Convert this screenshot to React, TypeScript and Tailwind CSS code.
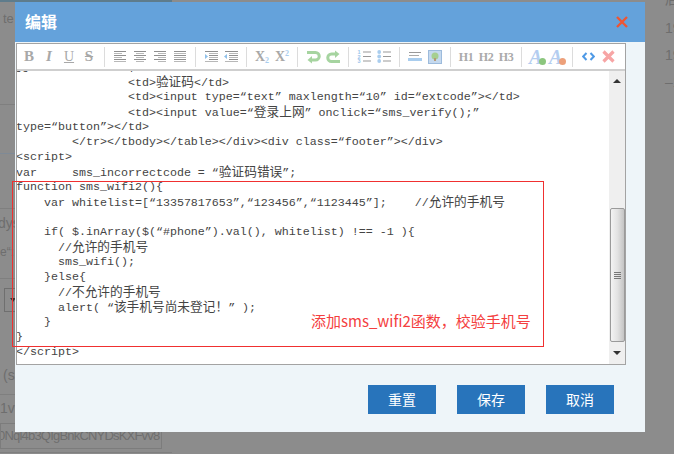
import React from "react";

const MONO = "font-['Liberation_Mono','Noto_Sans_CJK_SC',monospace]";

function CodeLine({ text }: { text: string }) {
  const parts = text.split(/([\u4e00-\u9fff！]+)/);
  return (
    <div className="h-[15px] leading-[15px] whitespace-pre overflow-hidden">
      {parts.map((p, i) =>
        i % 2 === 1 ? (
          <span key={i} className="text-[12.7px] leading-none font-['Noto_Sans_CJK_SC',sans-serif]">{p}</span>
        ) : (
          <span key={i}>{p}</span>
        )
      )}
    </div>
  );
}

const code = [
  "jj              |",
  "                <td>验证码</td>",
  "                <td><input type=“text” maxlength=“10” id=“extcode”></td>",
  "                <td><input value=“登录上网” onclick=“sms_verify();”",
  "type=“button”></td>",
  "        </tr></tbody></table></div><div class=“footer”></div>",
  "<script>",
  "var     sms_incorrectcode = “验证码错误”;",
  "function sms_wifi2(){",
  "    var whitelist=[“13357817653”,“123456”,“1123445”];    //允许的手机号",
  "",
  "    if( $.inArray($(“#phone”).val(), whitelist) !== -1 ){",
  "      //允许的手机号",
  "      sms_wifi();",
  "    }else{",
  "      //不允许的手机号",
  "      alert( “该手机号尚未登记！” );",
  "    }",
  "}",
  "</script>",
];

function Btn({ children }: { children: React.ReactNode }) {
  return <div className="w-5 h-5 flex items-center justify-center shrink-0">{children}</div>;
}
function Sep() {
  return (
    <div className="w-[11px] h-5 flex justify-center shrink-0">
      <div className="w-px h-5 bg-[#dcdcdc]" />
    </div>
  );
}
function Letter({ c, extra = "" }: { c: string; extra?: string }) {
  return <span className={`font-['Liberation_Serif',serif] leading-none text-[#a8a8a8] ${extra}`}>{c}</span>;
}
function Lines({ xs }: { xs: [number, number][] }) {
  return (
    <svg width="14" height="13" viewBox="0 0 14 13">
      {xs.map(([a, b], i) => (
        <rect key={i} x={a} y={1 + i * 2} width={b - a} height="1" fill={i % 2 ? "#b8b8b8" : "#8f8f8f"} />
      ))}
    </svg>
  );
}
const Indent = ({ out }: { out?: boolean }) => (
  <svg width="14" height="13" viewBox="0 0 14 13">
    {[0, 1, 2, 3, 4, 5].map((i) => (
      <rect key={i} x={i > 0 && i < 5 ? 5 : 1} y={1 + i * 2} width={i > 0 && i < 5 ? 9 : 13} height="1" fill={i % 2 ? "#b8b8b8" : "#8f8f8f"} />
    ))}
    <path d={out ? "M0 6.5L3 4v5z" : "M4 6.5L1 4v5z"} fill="#8fc0ea" />
  </svg>
);
const Arrow = ({ flip }: { flip?: boolean }) => (
  <svg width="15" height="14" viewBox="0 0 15 14" style={flip ? { transform: "rotate(180deg)" } : undefined}>
    <path d="M1 2.5H9.5a3.7 3.7 0 0 1 0 7.5H5" fill="none" stroke="#a6d4a0" strokeWidth="3" />
    <path d="M6 6L1.5 10L6 13.5z" fill="#a6d4a0" />
  </svg>
);
const ListIcon = ({ ordered }: { ordered?: boolean }) => (
  <svg width="14" height="14" viewBox="0 0 14 14">
    {[1.5, 6, 10.5].map((y, i) => (
      <g key={y}>
        {ordered ? (
          <text x="0.5" y={y + 2.5} fontSize="5.5" fontFamily="Liberation Sans" fontWeight="bold" fill="#9cc5ea">{i + 1}</text>
        ) : (
          <circle cx="2.2" cy={y + 0.5} r="1.9" fill="#a9cdee" />
        )}
        <rect x="6" y={y} width="8" height="1" fill="#999" />
      </g>
    ))}
  </svg>
);
const FontIcon = ({ add }: { add?: boolean }) => (
  <span className="relative w-4 h-4 block">
    <span className="absolute -top-[2px] left-0 font-['Liberation_Serif',serif] italic font-bold text-[20px] leading-[20px] text-[#b4cdf0]">A</span>
    <span className={`absolute -right-[1px] bottom-0 w-[7px] h-[7px] rounded-full ${add ? "bg-[#8cc67e]" : "bg-[#eda07a]"}`} />
  </span>
);

function Toolbar() {
  return (
    <div className="h-[27px] shrink-0 flex items-center pl-[2px] bg-white border-b-2 border-[#cfcfcf]">
      <Btn><Letter c="B" extra="font-bold text-[15px]" /></Btn>
      <Btn><Letter c="I" extra="italic font-bold text-[15px]" /></Btn>
      <Btn><Letter c="U" extra="underline text-[14px]" /></Btn>
      <Btn><Letter c="S" extra="line-through text-[15px] font-bold" /></Btn>
      <Sep />
      <Btn><Lines xs={[[1, 13], [1, 9], [1, 13], [1, 9], [1, 13], [1, 13]]} /></Btn>
      <Btn><Lines xs={[[1, 13], [3, 11], [1, 13], [3, 11], [1, 13], [3, 11]]} /></Btn>
      <Btn><Lines xs={[[1, 13], [5, 13], [1, 13], [5, 13], [1, 13], [5, 13]]} /></Btn>
      <Btn><Lines xs={[[1, 13], [1, 13], [1, 13], [1, 13], [1, 13], [1, 13]]} /></Btn>
      <Sep />
      <Btn><Indent /></Btn>
      <Btn><Indent out /></Btn>
      <Sep />
      <Btn>
        <span className="flex items-end h-[14px] font-['Liberation_Serif',serif] font-bold text-[14px] leading-none text-[#a8a8a8]">
          X<span className="text-[8px] leading-[7px] text-[#a9cdee]">2</span>
        </span>
      </Btn>
      <Btn>
        <span className="flex items-start h-[14px] font-['Liberation_Serif',serif] font-bold text-[14px] leading-none text-[#a8a8a8]">
          X<span className="text-[8px] leading-[7px] text-[#a9cdee]">2</span>
        </span>
      </Btn>
      <Sep />
      <Btn><Arrow /></Btn>
      <Btn><Arrow flip /></Btn>
      <Sep />
      <Btn><ListIcon ordered /></Btn>
      <Btn><ListIcon /></Btn>
      <Sep />
      <Btn>
        <svg width="14" height="13" viewBox="0 0 14 13">
          <rect x="1" y="2" width="12" height="1" fill="#999" />
          <rect x="1" y="5" width="10" height="1" fill="#aaa" />
          <rect x="0" y="8" width="14" height="3" fill="#a9cdee" />
        </svg>
      </Btn>
      <Btn>
        <svg width="14" height="14" viewBox="0 0 14 14">
          <rect x="0.5" y="0.5" width="13" height="13" fill="#c5d9ee" stroke="#9dbbdc" />
          <circle cx="7" cy="6" r="3.5" fill="#a6cf90" />
          <rect x="6" y="8" width="2" height="3" fill="#b59a78" />
        </svg>
      </Btn>
      <Sep />
      {["H1", "H2", "H3"].map((h) => (
        <Btn key={h}>
          <span className="font-['Liberation_Serif',serif] font-bold text-[12px] tracking-[-0.5px] text-[#aaa]">{h}</span>
        </Btn>
      ))}
      <Sep />
      <Btn><FontIcon add /></Btn>
      <Btn><FontIcon /></Btn>
      <Sep />
      <Btn>
        <svg width="13" height="9" viewBox="0 0 13 9">
          <path d="M4.5 1L1.2 4.5L4.5 8M8.5 1L11.8 4.5L8.5 8" fill="none" stroke="#4f9ae6" strokeWidth="2" />
        </svg>
      </Btn>
      <Btn>
        <svg width="13" height="13" viewBox="0 0 13 13">
          <path d="M1.5 1.5L11.5 11.5M11.5 1.5L1.5 11.5" stroke="#f7a5a5" strokeWidth="3.2" />
        </svg>
      </Btn>
    </div>
  );
}

function Scrollbar() {
  return (
    <div className="w-4 shrink-0 bg-[#efefef] flex flex-col items-center">
      <div className="h-[18px] shrink-0 flex items-center justify-center pt-[1px]">
        <div className="w-0 h-0 border-x-[4px] border-x-transparent border-b-[4px] border-b-[#333]" />
      </div>
      <div className="mt-[119px] w-[15px] h-[134px] shrink-0 rounded-[2px] border border-[#9a9a9a] bg-gradient-to-r from-[#f3f3f3] via-[#e2e2e2] to-[#c4c4c4] flex flex-col items-center justify-center gap-[1px]">
        {[0, 1, 2, 3].map((i) => <div key={i} className="w-[7px] h-px bg-[#777]" />)}
      </div>
      <div className="flex-1 flex items-center justify-center">
        <div className="w-0 h-0 border-x-[4px] border-x-transparent border-t-[4px] border-t-[#333]" />
      </div>
    </div>
  );
}

function Background() {
  const t = "font-['Liberation_Sans','Noto_Sans_CJK_SC',sans-serif] text-[#6e6e6e] whitespace-pre";
  return (
    <div className="w-[674px] h-[454px] bg-[#8c8c8c] flex justify-between overflow-hidden">
      <div className="w-[172px] shrink-0 flex flex-col">
        <div className="h-[2px] bg-[#5e7c8c] shrink-0" />
        <div className={`${t} mt-[9px] text-[13px] leading-[15px] h-[15px] pl-[3px]`}>te</div>
        <div className="mt-[78px] h-px bg-[#7f7f7f]" />
        <div className="mt-[48px] h-px bg-[#7f8a96]" />
        <div className="mt-[54px] h-px bg-[#7f7f7f]" />
        <div className={`${t} mt-[5px] text-[14px] leading-[18px] h-[18px] -ml-[2px]`}>dys</div>
        <div className={`${t} mt-[12px] text-[12px] leading-[16px] h-[16px]`}>e“:</div>
        <div className="mt-[18px] h-px bg-[#7f7f7f]" />
        <div className="mt-[9px] w-[14px] ml-[4px] h-[24px] border border-[#6f6f6f] flex items-center justify-end pr-px">
          <div className="w-0 h-0 border-x-[3px] border-x-transparent border-t-[4px] border-t-[#333]" />
        </div>
        <div className={`${t} mt-[54px] text-[14px] leading-[18px] h-[18px] pl-[3px]`}>(s</div>
        <div className="mt-[10px] h-px bg-[#7f7f7f]" />
        <div className={`${t} mt-[4px] text-[14px] leading-[18px] h-[18px]`}>1vl</div>
        <div className="mt-[6px] w-[162px] h-[26px] border border-[#7c7c7c] overflow-hidden">
          <div className={`${t} text-[13px] tracking-[-0.8px] leading-[24px] -ml-[3px]`}>0Nql4b3QIgBnkCNYDsKXFvv8</div>
        </div>
        <div className="mt-[3px] h-px bg-[#7f7f7f]" />
      </div>
      <div className="w-[9px] shrink-0 flex flex-col text-[14px]">
        <div className={`${t} -mt-[11px] h-[20px]`}>后</div>
        <div className={`${t} mt-[9px] h-[20px]`}>19</div>
        <div className={`${t} mt-[7px] h-[20px]`}>19</div>
        <div className={`${t} mt-[7px] h-[20px]`}>–1</div>
      </div>
    </div>
  );
}

export default function App() {
  return (
    <div className="relative w-[674px] h-[454px] overflow-hidden">
      <Background />
      {/* Dialog */}
      <div className="absolute left-[15px] top-[2px] w-[630px] h-[430px] bg-[#eef5f9] flex flex-col">
        <div className="h-10 shrink-0 bg-[#64a2db] flex items-center justify-between pl-[10px] pr-[17px]">
          <span className="text-white text-[16px] font-bold leading-none pb-[3px] font-['Noto_Sans_CJK_SC',sans-serif]">编辑</span>
          <svg width="12" height="12" viewBox="0 0 12 12">
            <path d="M1 1L11 11M11 1L1 11" stroke="#ee5533" strokeWidth="2.4" />
          </svg>
        </div>
        <div className="mt-px ml-px mr-[19px] h-[322px] shrink-0 flex flex-col bg-white border border-[#a3a3a3]">
          <Toolbar />
          <div className="flex-1 flex min-h-0">
            <div className={`flex-1 overflow-hidden text-[#444] text-[11.67px] ${MONO}`}>
              <div className="-mt-[11px] -ml-px">
                {code.map((l, i) => <CodeLine key={i} text={l} />)}
              </div>
            </div>
            <Scrollbar />
          </div>
        </div>
        <div className="mt-5 flex justify-end gap-[21px] pr-[31px]">
          {["重置", "保存", "取消"].map((b) => (
            <button key={b} className="w-[68px] h-[29px] bg-[#2874bb] text-white text-[14px] font-['Noto_Sans_CJK_SC',sans-serif]">
              {b}
            </button>
          ))}
        </div>
      </div>
      {/* Red annotation */}
      <div className="absolute left-[12px] top-[181px] w-[532px] h-[166px] border border-[#f03030] pointer-events-none" />
      <div className="absolute left-[311px] top-[311px] text-[15px] leading-[20px] text-[#f44040] font-['Noto_Sans_CJK_SC','Liberation_Sans',sans-serif]">
        添加sms_wifi2函数，校验手机号
      </div>
    </div>
  );
}
